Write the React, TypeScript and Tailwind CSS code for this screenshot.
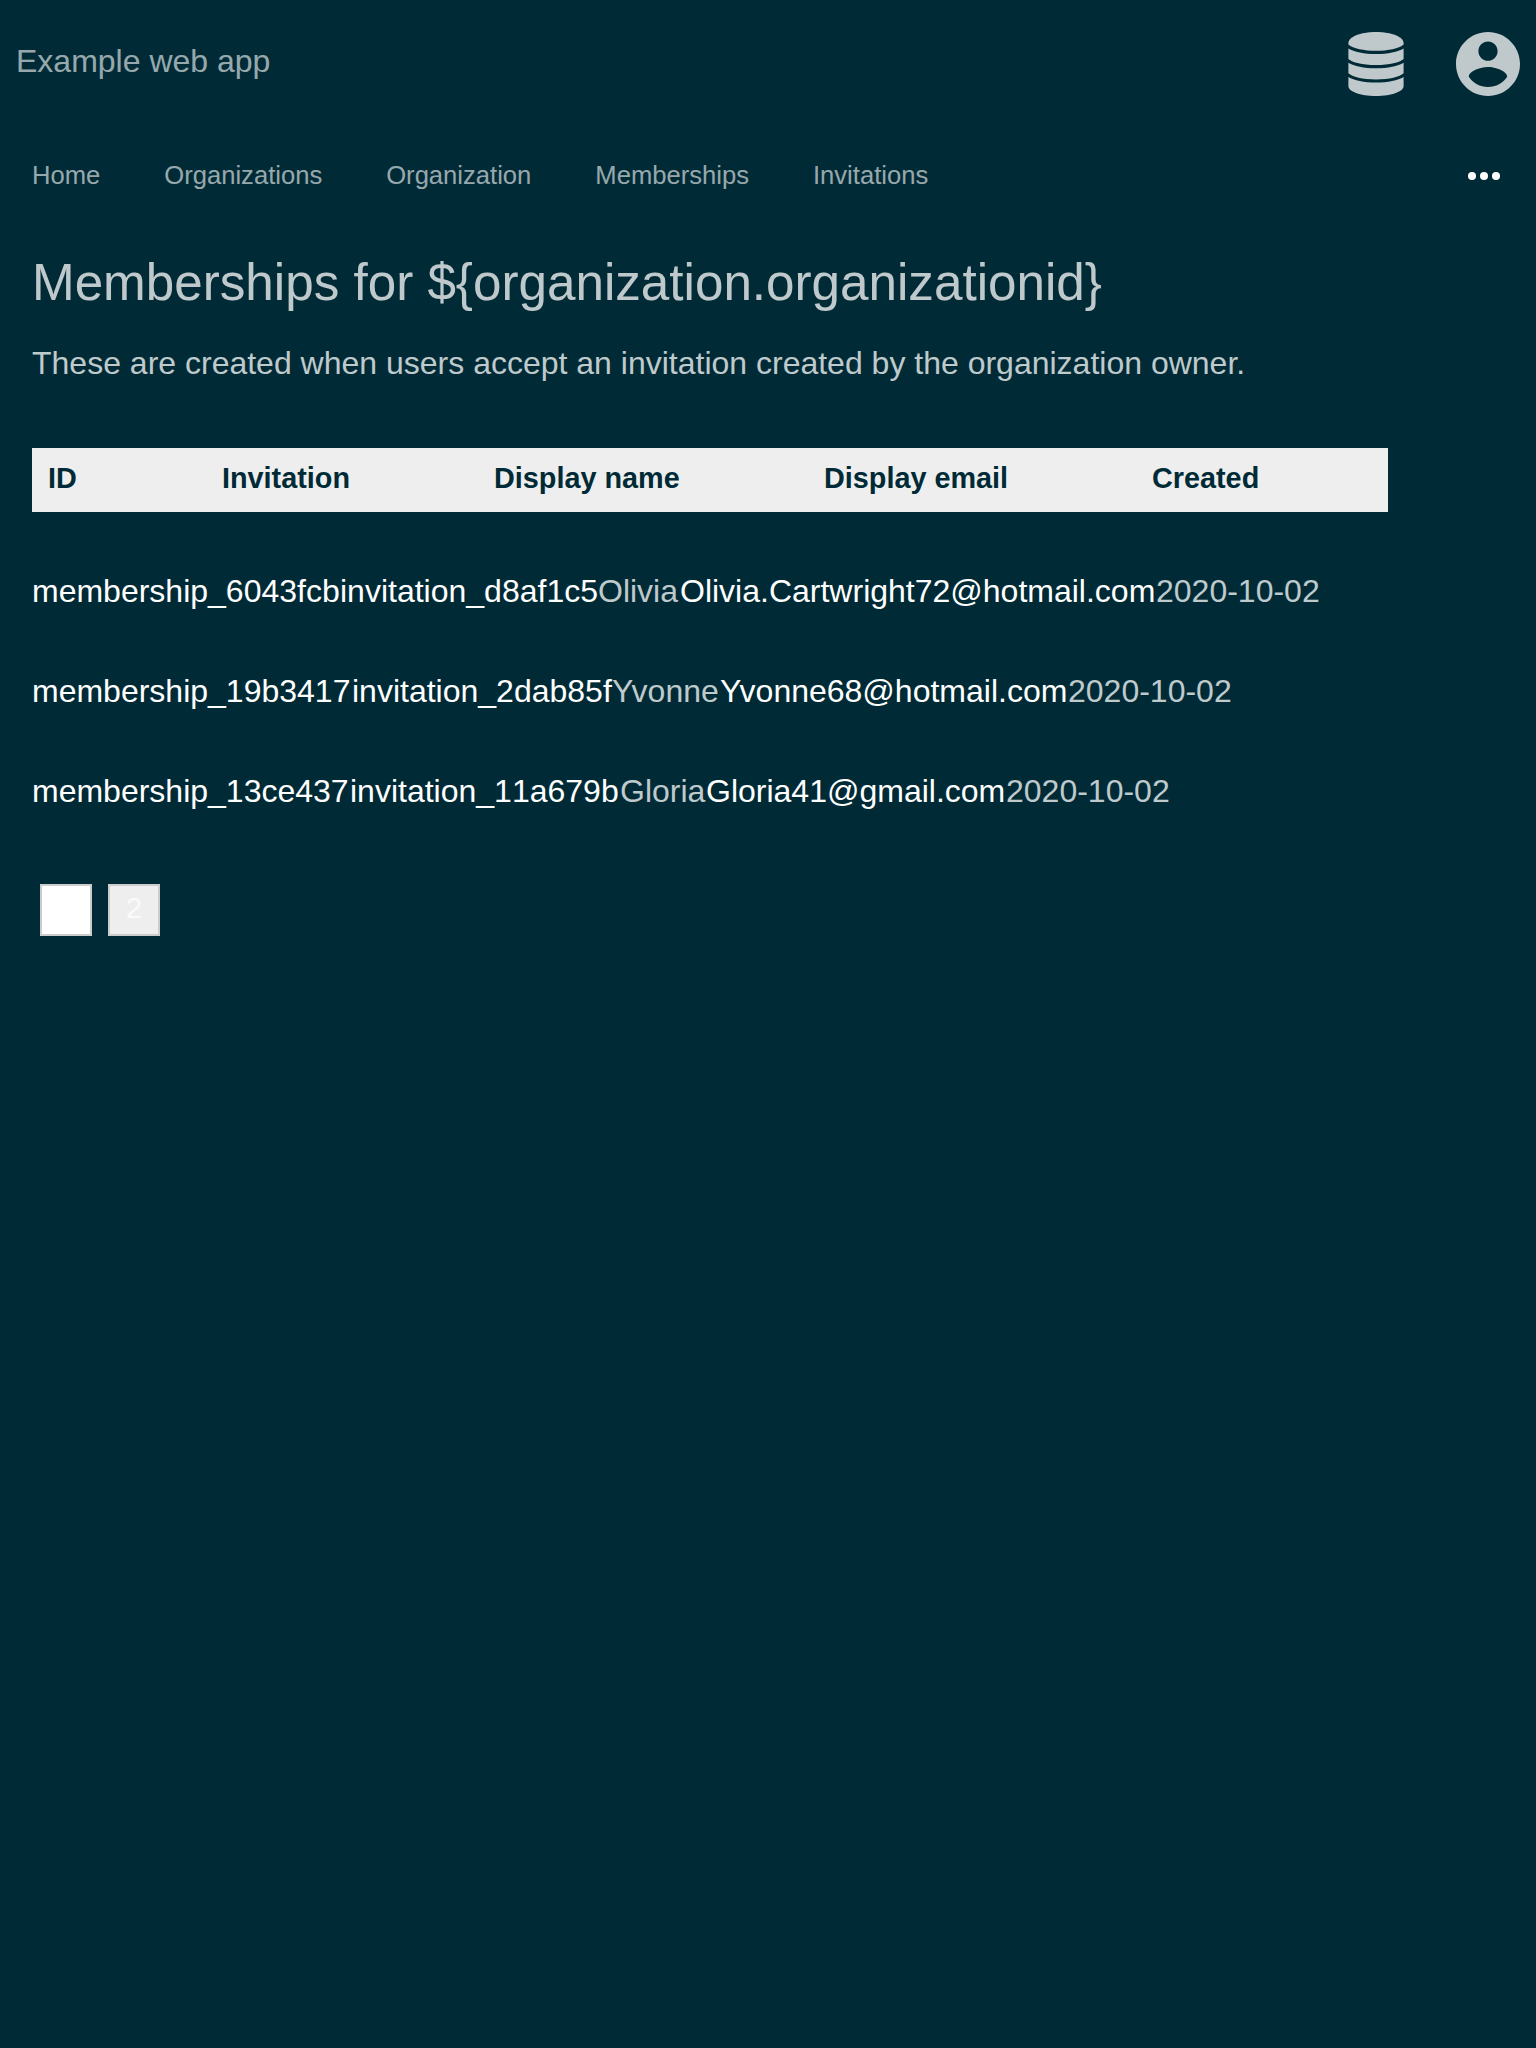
const nav = ["Home", "Organizations", "Organization", "Memberships", "Invitations"];

const columns = [
  { label: "ID", width: "w-[174px]" },
  { label: "Invitation", width: "w-[272px]" },
  { label: "Display name", width: "w-[330px]" },
  { label: "Display email", width: "w-[328px]" },
  { label: "Created", width: "w-[252px]" },
];

const rows = [
  [
    { text: "membership_6043fcb", style: "w-[308px] text-white" },
    { text: "invitation_d8af1c5", style: "w-[258px] text-white" },
    { text: "Olivia", style: "w-[82px]" },
    { text: "Olivia.Cartwright72@hotmail.com", style: "w-[476px] text-white" },
    { text: "2020-10-02", style: "w-[166px]" },
  ],
  [
    { text: "membership_19b3417", style: "w-[320px] text-white" },
    { text: "invitation_2dab85f", style: "w-[260px] text-white" },
    { text: "Yvonne", style: "w-[108px]" },
    { text: "Yvonne68@hotmail.com", style: "w-[348px] text-white" },
    { text: "2020-10-02", style: "w-[166px]" },
  ],
  [
    { text: "membership_13ce437", style: "w-[318px] text-white" },
    { text: "invitation_11a679b", style: "w-[270px] text-white [font-kerning:none]" },
    { text: "Gloria", style: "w-[86px]" },
    { text: "Gloria41@gmail.com", style: "w-[300px] text-white" },
    { text: "2020-10-02", style: "w-[166px]" },
  ],
];

function DatabaseIcon() {
  return (
    <svg className="h-16 w-14" viewBox="0 0 56 64" fill="currentColor">
      <path d="M.4 11C.4 5 12 0 28 0s27.600 5 27.600 11v1.500C51 16.500 40 18.800 28 18.800S5 16.500.4 12.500z" />
      <path d="M.4 16.500C6 20 16 22 28 22s22-2 27.600-5.500V27c-4 3.500-14 6-27.600 6S4.400 30.500.4 27z" />
      <path d="M.4 30.800C6 34.300 16 36.300 28 36.300s22-2 27.600-5.500v10.500c-4 3.500-14 6.200-27.600 6.200S4.400 44.800.4 41.300z" />
      <path d="M.4 45C6 48.500 16 50.500 28 50.500s22-2 27.600-5.500v9C55.600 59.500 44 64 28 64S.4 59.500.4 54z" />
    </svg>
  );
}

function AccountIcon() {
  return (
    <svg className="size-16" viewBox="2 2 20 20" fill="currentColor">
      <path d="M12 2C6.480 2 2 6.480 2 12s4.480 10 10 10 10-4.480 10-10S17.520 2 12 2zm0 3c1.660 0 3 1.340 3 3s-1.340 3-3 3-3-1.340-3-3 1.340-3 3-3zm0 14.200c-2.500 0-4.710-1.280-6-3.220.030-1.990 4-3.080 6-3.080 1.990 0 5.970 1.090 6 3.080-1.290 1.940-3.500 3.220-6 3.220z" />
    </svg>
  );
}

export default function App() {
  return (
    <div className="min-h-[2048px] bg-[#002b36] font-['Liberation_Sans',Arial,sans-serif] text-[32px] leading-[48px] text-white/75">
      <header className="flex h-32 justify-between px-4 pt-8">
        <h1 className="mt-[5px] text-white/60 leading-[48px]">Example web app</h1>
        <div className="flex gap-[52px]">
          <DatabaseIcon />
          <AccountIcon />
        </div>
      </header>
      <nav className="flex h-24 items-center justify-between pl-8 pr-9">
        <div className="flex gap-16 pb-[2px] text-[25.6px] text-white/60">
          {nav.map((item) => (
            <a key={item}>{item}</a>
          ))}
        </div>
        <svg className="h-2 w-8 text-white" viewBox="0 0 32 8" fill="currentColor">
          <circle cx="4" cy="4" r="4" />
          <circle cx="16" cy="4" r="4" />
          <circle cx="28" cy="4" r="4" />
        </svg>
      </nav>
      <main className="px-8">
        <h2 className="mt-[20px] text-[51.2px] leading-[78px]">{"Memberships for ${organization.organizationid}"}</h2>
        <p className="mt-[17px]">These are created when users accept an invitation created by the organization owner.</p>
        <div className="mt-[61px] flex h-16 w-[1356px] bg-[#eee] pt-[9px] text-[28.800px] font-bold leading-[43px] text-[#002b36]">
          {columns.map((c) => (
            <div key={c.label} className={`${c.width} shrink-0 pl-4`}>{c.label}</div>
          ))}
        </div>
        <div className="mt-[29px]">
          {rows.map((row) => (
            <div key={row[0].text} className="flex h-[100px] items-center">
              {row.map((cell) => (
                <span key={cell.text} className={`${cell.style} shrink-0 whitespace-nowrap`}>{cell.text}</span>
              ))}
            </div>
          ))}
        </div>
        <div className="mt-[43px] flex gap-4 pl-2 text-[28.800px] leading-[44px]">
          <a className="size-[52px] border-2 border-[#ccc] bg-white text-center text-white">1</a>
          <a className="size-[52px] border-2 border-[#ccc] bg-[#eee] text-center">2</a>
        </div>
      </main>
    </div>
  );
}
